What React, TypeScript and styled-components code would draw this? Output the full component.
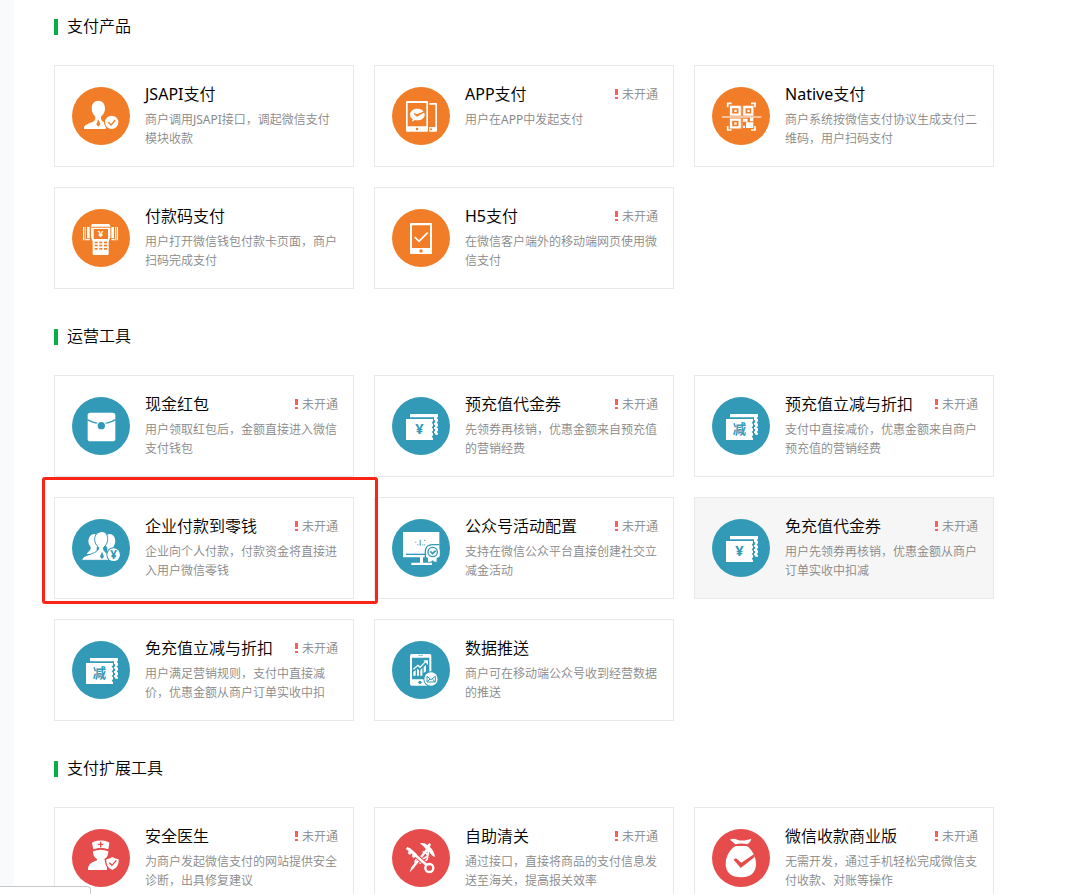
import React from 'react';
import styled, { createGlobalStyle } from 'styled-components';

const ORANGE = '#f17d28';
const TEAL = '#3299b7';
const RED = '#e64c4c';

const GlobalStyle = createGlobalStyle`
  * { box-sizing: border-box; }
  body {
    margin: 0;
    background: #fff;
    font-family: "Noto Sans", "Noto Sans CJK SC DemiLight", "Noto Sans CJK SC", sans-serif;
  }
`;

const Page = styled.div`
  display: flex;
  height: 100vh;
  overflow: hidden;
`;

const SideStrip = styled.aside`
  flex: 0 0 14px;
  background: #f9fafc;
`;

const Main = styled.main`
  flex: 1;
  display: flex;
  flex-direction: column;
  gap: 35px;
  padding: 14px 40px 40px;
`;

const SectionTitle = styled.h2`
  display: flex;
  align-items: center;
  gap: 9px;
  margin: 0 0 27px;
  font-size: 16px;
  line-height: 24px;
  font-weight: 300;
  color: #000;

  &::before {
    content: '';
    width: 4px;
    height: 16px;
    margin-top: 2px;
    background: #09ad47;
  }
`;

const Grid = styled.ul`
  display: grid;
  grid-template-columns: repeat(auto-fill, 300px);
  gap: 20px;
  margin: 0;
  padding: 0;
  list-style: none;
`;

const Item = styled.li`
  position: relative;
`;

const Card = styled.a<{ $active?: boolean }>`
  display: flex;
  gap: 15px;
  min-height: 102px;
  padding: 16px 15px 16px 17px;
  border: 1px solid #e7e9eb;
  background: ${(p) => (p.$active ? '#f6f6f6' : '#fff')};
  color: inherit;
  text-decoration: none;
`;

const Highlight = styled.div`
  position: absolute;
  z-index: 1;
  inset: -20px -24px -5px -12px;
  border: 3px solid #fd2415;
  border-radius: 3px;
  pointer-events: none;
`;

const Icon = styled.svg`
  flex: none;
  width: 58px;
  height: 58px;
  margin-top: 5px;
`;

const Glyph = styled.text`
  font-family: "Noto Sans", "Noto Sans CJK SC", sans-serif;
  font-weight: 700;
  text-anchor: middle;
`;

const Body = styled.div`
  flex: 1;
  min-width: 0;
`;

const CardHead = styled.div`
  display: flex;
  justify-content: space-between;
  align-items: flex-end;
  margin-bottom: 4px;
`;

const CardTitle = styled.h3`
  margin: 0;
  font-size: 16px;
  line-height: 24px;
  font-weight: 300;
  color: #000;
`;

const Latin = styled.span`
  font-weight: 400;
`;

const Status = styled.span`
  display: flex;
  align-items: center;
  gap: 4px;
  font-size: 12px;
  line-height: 22px;
  color: #888;
`;

const Mark = styled.svg`
  width: 3px;
  height: 10px;
  margin-bottom: 2px;
`;

const Desc = styled.p`
  margin: 0;
  font-size: 12px;
  line-height: 19px;
  color: #888;
`;

const LinkPreview = styled.div`
  position: fixed;
  left: 0;
  bottom: 0;
  width: 91px;
  height: 8px;
  border: 1px solid #c9c9c9;
  border-width: 1px 1px 0 0;
  border-radius: 0 4px 0 0;
  background: #fff;
`;

const line = (color: string, width: number) => ({
  fill: 'none',
  stroke: color,
  strokeWidth: width,
});

// Latin runs need a heavier weight to balance the light Chinese glyphs.
const mixed = (text: string) =>
  text
    .split(/([A-Za-z0-9]+)/)
    .filter(Boolean)
    .map((part, i) => (/^[A-Za-z0-9]/.test(part) ? <Latin key={i}>{part}</Latin> : part));

const JsapiIcon = () => (
  <>
    <path d="M79 41c-12 0-20 9-20 23 0 12 5 19 11 25 1 8-2 13-9 16-14 6-25 9-25 18v3h66v-17l-7-4c-6-3-9-8-8-16 7-6 12-13 12-25 0-14-8-23-20-23z" fill="#fff" />
    <path d="M79 97l-6 15 6 7 6-7z" fill={ORANGE} />
    <circle cx="119" cy="106" r="23" fill={ORANGE} />
    <circle cx="119" cy="106" r="20" fill="#fff" />
    <path d="M109 106l8 8 13-15" {...line(ORANGE, 4)} />
  </>
);

const AppIcon = () => (
  <>
    <path d="M112 48h20q3 0 3 3v80q0 3-3 3h-20v-12h18V53h-18z" fill="#fff" />
    <path d="M112 120h20v12h-20z" fill="#fff" />
    <circle cx="117" cy="127" r="3" fill={ORANGE} />
    <path fillRule="evenodd" d="M45 42h60q3 0 3 3v86q0 3-3 3H45q-3 0-3-3V45q0-3 3-3zm2 6v70h56V48z" fill="#fff" />
    <circle cx="75" cy="126" r="4" fill={ORANGE} />
    <path d="M76 65c-13 0-22 8-22 18 0 6 3 10 8 13l-2 8 9-5c15 3 29-4 29-16 0-10-9-18-22-18z" fill="#fff" />
    <path d="M66 80l9 8 21-13-21 8z" fill={ORANGE} stroke={ORANGE} strokeWidth="3" />
  </>
);

const NativeIcon = () => (
  <>
    <path d="M47 61V49h12M117 49h12v12M129 117v12h-12M59 129H47v-12" {...line('#fff', 5)} />
    <path d="M57 60h26v23H57zM97 60h24v23H97zM57 98h26v23H57z" {...line('#fff', 7)} />
    <path d="M67 68h7v7h-7zM106 68h7v7h-7zM67 106h7v7h-7zM93 95h14v9H93zM114 91h10v12h-10zM102 106h22v17h-22zM93 116h6v7h-6z" fill="#fff" />
    <path d="M90 57v67" {...line('#f9c5a0', 2)} />
    <path d="M30 90h118" {...line('#fbd9c2', 4)} />
  </>
);

const ScannerIcon = () => (
  <>
    <path d="M60 45h52l4 8H56z" fill="#fff" />
    <path d="M57 56h58v28l-5 14v37q0 3-3 3H65q-3 0-3-3V98l-5-14z" fill="#fff" />
    <path d="M65 60h43v30H65z" fill={ORANGE} />
    <Glyph x="86" y="85" fontSize="28" fill="#fff">¥</Glyph>
    {[98, 107, 117].map((y) =>
      [68, 82, 96].map((x) => <rect key={`${x}-${y}`} x={x} y={y} width="9" height="5" fill={ORANGE} />),
    )}
    <path d="M33 54h4v40h-4zM40 54h2v40h-2zM45 54h8v34h-8zM40 90h13v4H40zM118 54h8v34h-8zM129 54h3v40h-3zM134 54h4v40h-4zM118 90h10v4h-10z" fill="#fff" />
  </>
);

const H5Icon = () => (
  <>
    <path fillRule="evenodd" d="M57 42h60q3 0 3 3v87q0 3-3 3H57q-3 0-3-3V45q0-3 3-3zm3 7v68h54V49z" fill="#fff" />
    <circle cx="87" cy="126" r="5" fill={ORANGE} />
    <path d="M68 84l13 13 26-26" {...line('#fff', 5)} />
  </>
);

const PacketIcon = () => (
  <>
    <rect x="47" y="47" width="83" height="86" rx="8" fill="#fff" />
    <path d="M46 68q42 24 85 0" {...line(TEAL, 4)} />
    <circle cx="88" cy="86" r="15" fill="#fff" />
    <circle cx="88" cy="86" r="11" fill={TEAL} />
  </>
);

const CouponIcon = ({ label }: { label: string }) => (
  <>
    <path d="M54 51h84v8l-4 4 4 4v6l-4 4 4 4v6l-4 4 4 4v6l-4 4 4 4v4h-12V61H54z" fill="#fff" />
    <path d="M42 66h81v7l-4 4 4 4v6l-4 4 4 4v6l-4 4 4 4v6l-4 4 4 4v6H42z" fill="#fff" />
    <path d="M127 70v50" stroke={TEAL} strokeWidth="5" strokeDasharray="7 6" />
    <Glyph x="82" y="112" fontSize={label === '¥' ? 44 : 40} fill={TEAL}>
      {label}
    </Glyph>
  </>
);

const PeopleIcon = () => (
  <>
    <ellipse cx="67" cy="66" rx="18" ry="21" fill="#fff" />
    <ellipse cx="113" cy="66" rx="17" ry="21" fill="#fff" />
    <path d="M54 76h20v30H44c2-9 14-12 12-20zM126 76h-20v30h26c0-8-10-12-8-20z" fill="#fff" />
    <path
      d="M90 38c-13 0-22 9-22 23 0 11 5 18 12 24 0 8-4 11-13 16-16 8-36 8-38 23h82v-16l-8-7c-7-5-9-8-8-16 7-6 12-13 12-24 0-14-5-23-17-23z"
      fill="#fff"
      stroke={TEAL}
      strokeWidth="3"
    />
    <path d="M90 98l-6 15 6 7 6-7z" fill={TEAL} />
    <circle cx="125" cy="107" r="22" fill={TEAL} />
    <circle cx="125" cy="107" r="19" fill="#fff" />
    <Glyph x="125" y="120" fontSize="35" fill={TEAL}>¥</Glyph>
  </>
);

const MonitorIcon = () => (
  <>
    <path d="M33 39h109v76H33zM84 115h9v16h-9zM58 131h62v7H58z" fill="#fff" />
    <path d="M42 106h63" {...line(TEAL, 4)} />
    <path d="M70 68h3v3h-3zM76 76h3v3h-3zM83 62h3v18h-3zM91 76h3v3h-3zM97 62h3v4h-3zM97 76h3v3h-3z" fill={TEAL} />
    <path d="M100 126V99q0-22 22-22h20" {...line(TEAL, 4)} />
    <path d="M108 82h28l7 10v18l-9 8v10h-7l-5-4-5 4h-9v-10l-5-6V92z" fill="#fff" />
    <circle cx="122" cy="99" r="14" {...line(TEAL, 4)} />
    <path d="M115 97l7 7 9-9" {...line(TEAL, 5)} />
  </>
);

const PushIcon = () => (
  <>
    <path fillRule="evenodd" d="M59 39h54q5 0 5 5v85q0 5-5 5H59q-5 0-5-5V44q0-5 5-5zm1 11v65h52V50z" fill="#fff" />
    <path d="M79 43h14" {...line(TEAL, 2)} />
    <circle cx="84" cy="124" r="5" fill={TEAL} />
    <path d="M64 85l14-12 6 6 17-18" {...line('#fff', 4)} />
    <path d="M94 58h14v14z" fill="#fff" />
    <path d="M64 92l7-5v17h-7zM75 83l6 4v17h-6zM85 87l6-6v23h-6zM95 78l7-7v20l-7 5z" fill="#fff" />
    <circle cx="117" cy="114" r="23" fill={TEAL} />
    <circle cx="117" cy="114" r="20" fill="#fff" />
    <path d="M105 106v17h25v-17M105 106l12 10 13-10M106 122l8-8M129 122l-8-8" {...line(TEAL, 3)} />
  </>
);

const DoctorIcon = () => (
  <>
    <path d="M60 43q0-4 5-5 21-7 42 0 5 1 5 5l-3 18q-23-9-45 0z" fill="#fff" />
    <path d="M86 38v17M78 46h16" {...line(RED, 4)} />
    <path d="M63 67q23-9 46 0c0 13-5 19-12 24 1 5 5 7 8 9v23H48c0-16 9-22 20-26 6-2 8-3 7-7-7-4-12-10-12-23z" fill="#fff" />
    <path d="M121 80q-9 7-22 8c-1 22 6 32 22 38 16-6 24-16 23-38q-14-1-23-8z" fill={RED} />
    <path d="M121 84q-7 6-18 7c-1 17 5 26 18 32 13-6 20-15 19-32q-11-1-19-7z" fill="#fff" />
    <path d="M112 101l8 8 13-15" {...line(RED, 4)} />
  </>
);

const CustomsIcon = () => (
  <>
    <path d="M84 43c9-2 17 1 22 6l4-5c4-3 8 1 6 5l-3 5c6 4 14 14 16 30-8-2-13-8-16-15l-9-1c-2-10-10-17-20-25z" fill="#fff" />
    <path d="M108 66c4 9 0 16-9 20-10 4-15 10-14 19M92 68c10 2 16 8 15 18-2 10-12 14-24 14M80 86c-10 5-13 12-9 20" {...line('#fff', 5)} />
    <path d="M111 60l-48 60-10 10 5-15 47-59z" fill="#fff" />
    <path d="M50 61l54 47" {...line(RED, 14)} />
    <path d="M44 56l60 52" {...line('#fff', 8)} />
    <path d="M43 62l10-6 22 20-9 12-7-6 4-6-4-4-5 6-7-6 4-6-4-3z" fill="#fff" />
    <circle cx="112" cy="117" r="12" fill={RED} stroke="#fff" strokeWidth="7" />
  </>
);

const BagIcon = () => (
  <>
    <path d="M54 32c9-5 15-3 22 0 14 6 28 1 42-3-1 8-7 13-12 17-12-3-25-3-36 0-5-5-10-9-16-14z" fill="#fff" />
    <path d="M71 51h33c15 9 28 31 28 54 0 26-17 40-45 40s-46-14-46-40c0-23 13-45 30-54z" fill="#fff" />
    <path d="M65 92q6-6 11-1l12 10 40-27v10L86 117z" fill={RED} />
  </>
);

type Entry = {
  title: string;
  desc: string;
  icon: React.ReactNode;
  closed?: boolean;
  active?: boolean;
  highlighted?: boolean;
};

type Group = { name: string; color: string; items: Entry[] };

const groups: Group[] = [
  {
    name: '支付产品',
    color: ORANGE,
    items: [
      { title: 'JSAPI支付', desc: '商户调用JSAPI接口，调起微信支付模块收款', icon: <JsapiIcon /> },
      { title: 'APP支付', desc: '用户在APP中发起支付', icon: <AppIcon />, closed: true },
      { title: 'Native支付', desc: '商户系统按微信支付协议生成支付二维码，用户扫码支付', icon: <NativeIcon /> },
      { title: '付款码支付', desc: '用户打开微信钱包付款卡页面，商户扫码完成支付', icon: <ScannerIcon /> },
      { title: 'H5支付', desc: '在微信客户端外的移动端网页使用微信支付', icon: <H5Icon />, closed: true },
    ],
  },
  {
    name: '运营工具',
    color: TEAL,
    items: [
      { title: '现金红包', desc: '用户领取红包后，金额直接进入微信支付钱包', icon: <PacketIcon />, closed: true },
      { title: '预充值代金券', desc: '先领券再核销，优惠金额来自预充值的营销经费', icon: <CouponIcon label="¥" />, closed: true },
      { title: '预充值立减与折扣', desc: '支付中直接减价，优惠金额来自商户预充值的营销经费', icon: <CouponIcon label="减" />, closed: true },
      { title: '企业付款到零钱', desc: '企业向个人付款，付款资金将直接进入用户微信零钱', icon: <PeopleIcon />, closed: true, highlighted: true },
      { title: '公众号活动配置', desc: '支持在微信公众平台直接创建社交立减金活动', icon: <MonitorIcon />, closed: true },
      { title: '免充值代金券', desc: '用户先领券再核销，优惠金额从商户订单实收中扣减', icon: <CouponIcon label="¥" />, closed: true, active: true },
      { title: '免充值立减与折扣', desc: '用户满足营销规则，支付中直接减价，优惠金额从商户订单实收中扣', icon: <CouponIcon label="减" />, closed: true },
      { title: '数据推送', desc: '商户可在移动端公众号收到经营数据的推送', icon: <PushIcon /> },
    ],
  },
  {
    name: '支付扩展工具',
    color: RED,
    items: [
      { title: '安全医生', desc: '为商户发起微信支付的网站提供安全诊断，出具修复建议', icon: <DoctorIcon />, closed: true },
      { title: '自助清关', desc: '通过接口，直接将商品的支付信息发送至海关，提高报关效率', icon: <CustomsIcon />, closed: true },
      { title: '微信收款商业版', desc: '无需开发，通过手机轻松完成微信支付收款、对账等操作', icon: <BagIcon />, closed: true },
    ],
  },
];

const ProductCard = ({ entry, color }: { entry: Entry; color: string }) => (
  <Item>
    <Card href="#" $active={entry.active}>
      <Icon viewBox="0 0 174 174" aria-hidden="true">
        <circle cx="87" cy="87" r="87" fill={color} />
        {entry.icon}
      </Icon>
      <Body>
        <CardHead>
          <CardTitle>{mixed(entry.title)}</CardTitle>
          {entry.closed && (
            <Status>
              <Mark viewBox="0 0 3 10" aria-hidden="true">
                <path d="M0 0h3v6H0zM0 8h3v2H0z" fill="#fb5c5c" />
              </Mark>
              未开通
            </Status>
          )}
        </CardHead>
        <Desc>{entry.desc}</Desc>
      </Body>
    </Card>
    {entry.highlighted && <Highlight />}
  </Item>
);

export default function App() {
  return (
    <Page>
      <GlobalStyle />
      <SideStrip />
      <Main>
        {groups.map((group) => (
          <section key={group.name}>
            <SectionTitle>{group.name}</SectionTitle>
            <Grid>
              {group.items.map((entry) => (
                <ProductCard key={entry.title} entry={entry} color={group.color} />
              ))}
            </Grid>
          </section>
        ))}
      </Main>
      <LinkPreview />
    </Page>
  );
}
